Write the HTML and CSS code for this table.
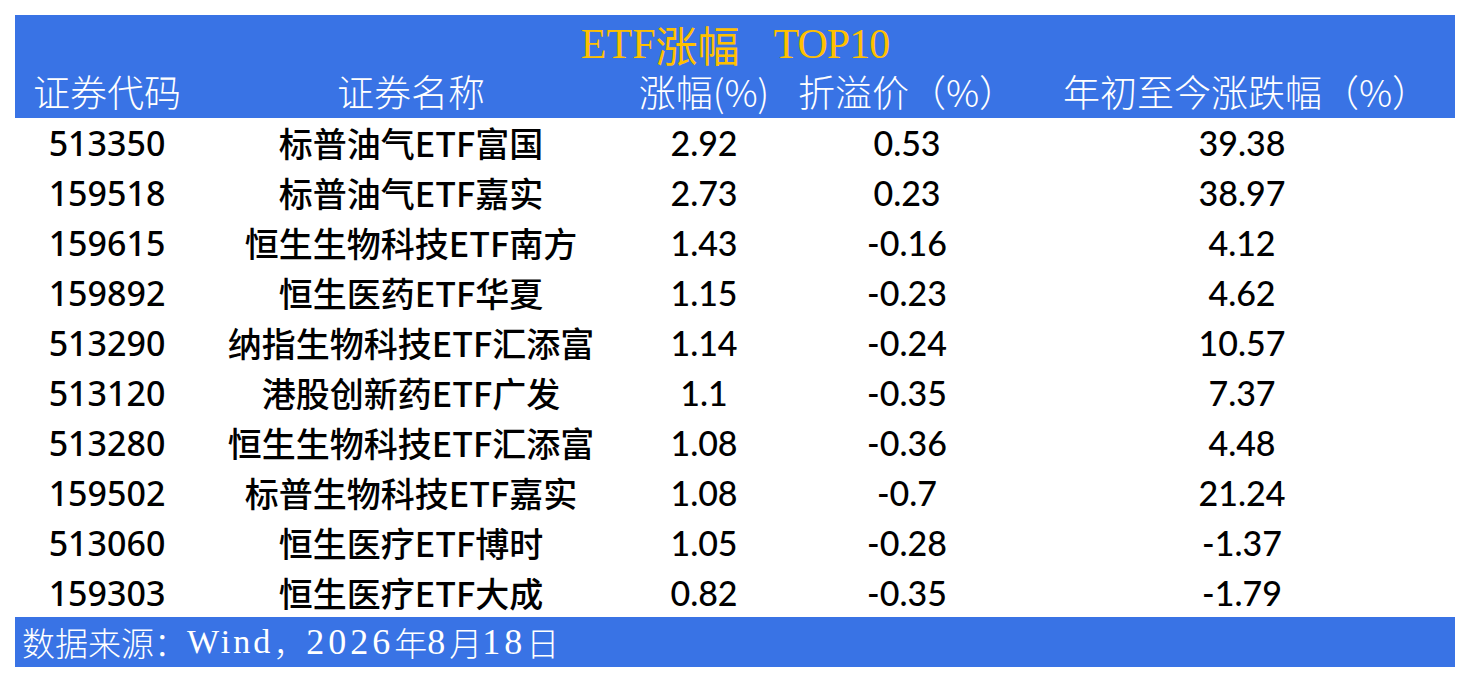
FILE: index.html
```html
<!DOCTYPE html>
<html lang="zh-CN">
<head>
<meta charset="utf-8">
<title>ETF涨幅 TOP10</title>
<link rel="stylesheet" href="styles.css">
</head>
<body>
<div class="board">
  <div class="head">
    <div class="title"><span class="lat">ETF</span><span>涨幅</span><span class="lat gap">TOP10</span></div>
    <div class="row hrow">
      <div class="cell">证券代码</div>
      <div class="cell">证券名称</div>
      <div class="cell">涨幅(%)</div>
      <div class="cell">折溢价（%）</div>
      <div class="cell">年初至今涨跌幅（%）</div>
    </div>
  </div>
  <div class="body">
    <div class="row"><div class="cell code">513350</div><div class="cell name">标普油气ETF富国</div><div class="cell num">2.92</div><div class="cell num">0.53</div><div class="cell num">39.38</div></div>
    <div class="row"><div class="cell code">159518</div><div class="cell name">标普油气ETF嘉实</div><div class="cell num">2.73</div><div class="cell num">0.23</div><div class="cell num">38.97</div></div>
    <div class="row"><div class="cell code">159615</div><div class="cell name">恒生生物科技ETF南方</div><div class="cell num">1.43</div><div class="cell num">-0.16</div><div class="cell num">4.12</div></div>
    <div class="row"><div class="cell code">159892</div><div class="cell name">恒生医药ETF华夏</div><div class="cell num">1.15</div><div class="cell num">-0.23</div><div class="cell num">4.62</div></div>
    <div class="row"><div class="cell code">513290</div><div class="cell name">纳指生物科技ETF汇添富</div><div class="cell num">1.14</div><div class="cell num">-0.24</div><div class="cell num">10.57</div></div>
    <div class="row"><div class="cell code">513120</div><div class="cell name">港股创新药ETF广发</div><div class="cell num">1.1</div><div class="cell num">-0.35</div><div class="cell num">7.37</div></div>
    <div class="row"><div class="cell code">513280</div><div class="cell name">恒生生物科技ETF汇添富</div><div class="cell num">1.08</div><div class="cell num">-0.36</div><div class="cell num">4.48</div></div>
    <div class="row"><div class="cell code">159502</div><div class="cell name">标普生物科技ETF嘉实</div><div class="cell num">1.08</div><div class="cell num">-0.7</div><div class="cell num">21.24</div></div>
    <div class="row"><div class="cell code">513060</div><div class="cell name">恒生医疗ETF博时</div><div class="cell num">1.05</div><div class="cell num">-0.28</div><div class="cell num">-1.37</div></div>
    <div class="row"><div class="cell code">159303</div><div class="cell name">恒生医疗ETF大成</div><div class="cell num">0.82</div><div class="cell num">-0.35</div><div class="cell num">-1.79</div></div>
  </div>
  <div class="foot">数据来源：<span class="fw">Wind</span>，<span class="fd">2026</span>年<span class="fd">8</span>月<span class="fd">18</span>日</div>
</div>
</body>
</html>
```
FILE: styles.css
```css
* { box-sizing: border-box; }
html, body { margin: 0; padding: 0; background: #ffffff; }
body { padding: 15px 15px 0 15px; }
.board { width: 1440px; }
.head { background: #3973e5; height: 103px; display: flex; flex-direction: column; }
.title {
  height: 54px;
  display: flex; align-items: center; justify-content: center;
  color: #ffc000;
  font-family: "Noto Sans CJK SC", sans-serif;
  font-weight: 400;
  font-size: 42px;
  line-height: 1;
  padding-top: 4px;
}
.title .lat { font-family: "Liberation Serif", serif; font-size: 42px; letter-spacing: 0; line-height: 1; }
.title .gap { margin-left: 34px; letter-spacing: -1px; }
.row {
  display: grid;
  grid-template-columns: 184px 424px 162px 244px 426px;
  height: 50px;
  align-items: center;
}
.hrow {
  height: 49px;
  color: #ffffff;
  font-family: "Noto Sans CJK SC", sans-serif;
  font-weight: 300;
  font-size: 37px;
}
.cell { text-align: center; white-space: nowrap; line-height: 1; }
.hrow .cell { padding-top: 2px; padding-bottom: 6px; }
.hrow .cell:last-child { padding-left: 8px; }
.body { background: #ffffff; color: #000000; }
.code { font-family: "Noto Sans", "Noto Sans CJK SC", sans-serif; font-size: 34px; font-weight: 500; }
.name { font-family: "Noto Sans CJK SC", sans-serif; font-weight: 500; font-size: 34px; }
.num { font-family: "Lato", sans-serif; font-size: 34px; font-weight: 500; }
.foot {
  background: #3973e5;
  height: 50px;
  margin-top: -1px;
  display: flex; align-items: center;
  padding-left: 7px;
  color: #ffffff;
  font-family: "Noto Sans CJK SC", sans-serif;
  font-weight: 300;
  font-size: 33px;
  line-height: 1;
}
.foot .fw { font-family: "Liberation Serif", serif; font-size: 34px; letter-spacing: 3px; }
.foot .fd { font-family: "Liberation Serif", serif; font-size: 36px; letter-spacing: 4px; }
```
